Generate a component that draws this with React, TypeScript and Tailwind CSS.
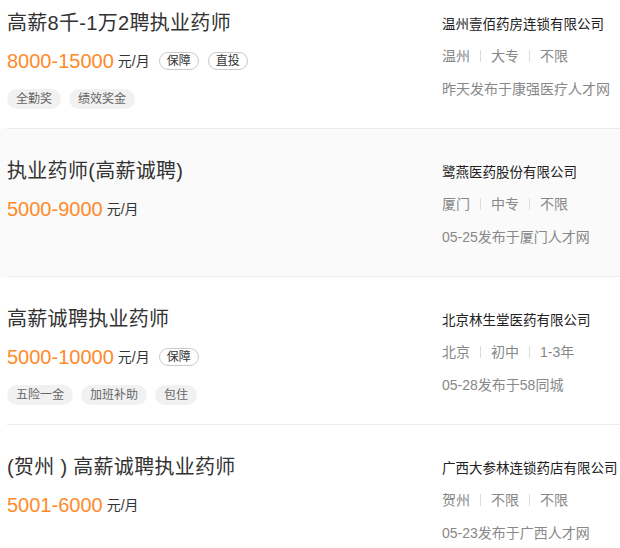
type Job = {
  title: string;
  salary: string;
  badges: string[];
  tags: string[];
  company: string;
  meta: string[];
  date: string;
  active?: boolean;
};

const jobs: Job[] = [
  {
    title: "高薪8千-1万2聘执业药师",
    salary: "8000-15000",
    badges: ["保障", "直投"],
    tags: ["全勤奖", "绩效奖金"],
    company: "温州壹佰药房连锁有限公司",
    meta: ["温州", "大专", "不限"],
    date: "昨天发布于康强医疗人才网",
  },
  {
    title: "执业药师(高薪诚聘)",
    salary: "5000-9000",
    badges: [],
    tags: [],
    company: "鹭燕医药股份有限公司",
    meta: ["厦门", "中专", "不限"],
    date: "05-25发布于厦门人才网",
    active: true,
  },
  {
    title: "高薪诚聘执业药师",
    salary: "5000-10000",
    badges: ["保障"],
    tags: ["五险一金", "加班补助", "包住"],
    company: "北京林生堂医药有限公司",
    meta: ["北京", "初中", "1-3年"],
    date: "05-28发布于58同城",
  },
  {
    title: "(贺州 ) 高薪诚聘执业药师",
    salary: "5001-6000",
    badges: [],
    tags: [],
    company: "广西大参林连锁药店有限公司",
    meta: ["贺州", "不限", "不限"],
    date: "05-23发布于广西人才网",
  },
];

function JobRow({ job }: { job: Job }) {
  return (
    <div className={job.active ? "bg-[#fafafa]" : "bg-white"}>
      <div className="ml-[7px] h-[148px] flex border-b border-[#ececec]">
        {/* left: title, salary, welfare */}
        <div className="flex-1 pt-[29px]">
          <div className="text-[20px] leading-[26px] tracking-[0.3px] text-[#333]">{job.title}</div>
          <div className="mt-3 flex items-center h-[26px]">
            <span className="text-[20px] leading-[26px] text-[#ff8a2a]">{job.salary}</span>
            <span className="ml-[4px] text-[14px] text-[#333]">元/月</span>
            {job.badges.map((b) => (
              <span
                key={b}
                className="ml-[9px] h-[18px] px-[7px] flex items-center rounded-full border border-[#c9c9c9] text-[12px] leading-none text-[#333]"
              >
                {b}
              </span>
            ))}
          </div>
          {job.tags.length > 0 && (
            <div className="mt-[15px] flex gap-2">
              {job.tags.map((t) => (
                <span
                  key={t}
                  className="h-[20px] px-[9px] flex items-center rounded-full bg-[#f1f1f1] text-[12px] leading-none text-[#666]"
                >
                  {t}
                </span>
              ))}
            </div>
          )}
        </div>

        {/* right: company info */}
        <div className="w-[178px] pt-[34px]">
          <div className="text-[13.5px] leading-[20px] text-[#222] whitespace-nowrap">
            {job.company}
          </div>
          <div className="mt-[11px] flex items-center text-[14px] leading-[20px] text-[#888]">
            {job.meta.map((m, i) => (
              <span key={i} className="flex items-center">
                {i > 0 && <span className="mx-[10px] w-px h-[12px] bg-[#dcdcdc]" />}
                {m}
              </span>
            ))}
          </div>
          <div className="mt-[13px] text-[14px] leading-[20px] text-[#888] whitespace-nowrap">
            {job.date}
          </div>
        </div>
      </div>
    </div>
  );
}

export default function App() {
  return (
    <div
      className="w-[620px] h-[548px] overflow-hidden bg-white"
      style={{ fontFamily: '"Liberation Sans", "Noto Sans CJK SC", sans-serif' }}
    >
      <div className="mt-[-19px]">
        {jobs.map((j) => (
          <JobRow key={j.title} job={j} />
        ))}
      </div>
    </div>
  );
}
